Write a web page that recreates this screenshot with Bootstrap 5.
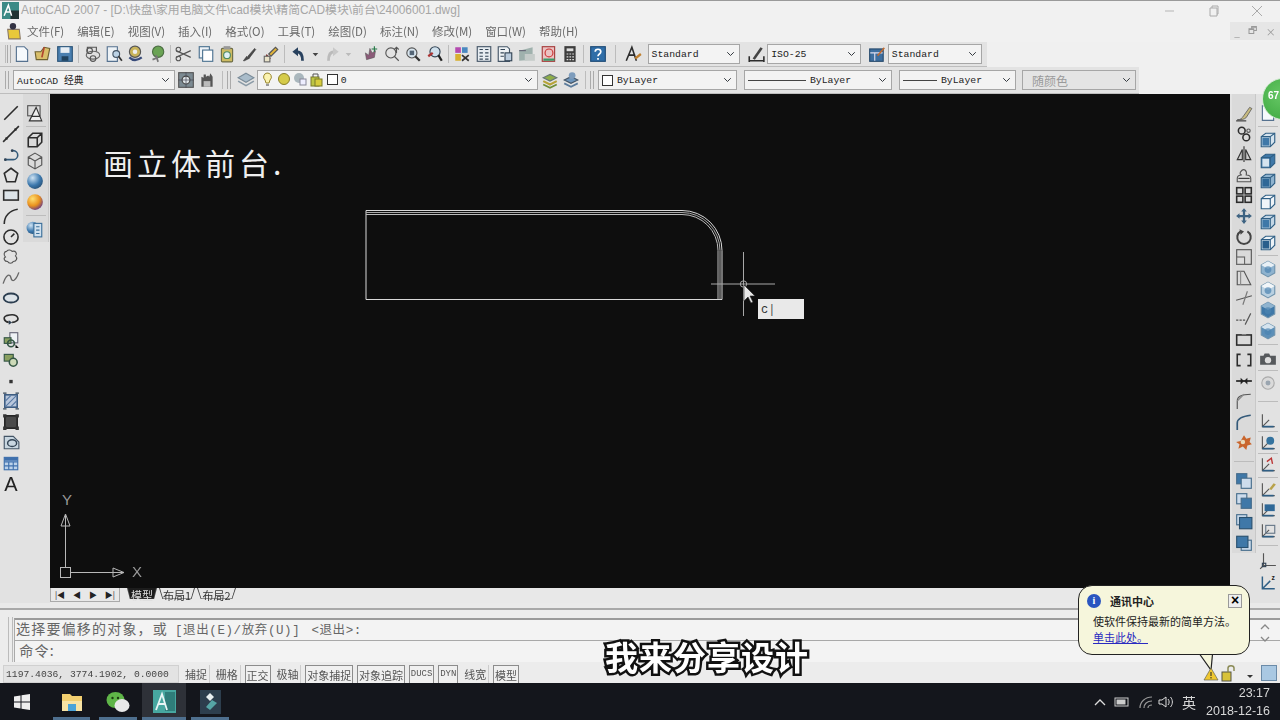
<!DOCTYPE html>
<html lang="zh-CN">
<head>
  <meta charset="UTF-8" />
  <meta name="viewport" content="width=device-width, initial-scale=1.0"/>
  <title>AutoCAD 2007</title>
  <link href="https://cdn.jsdelivr.net/npm/bootstrap@5.3.0/dist/css/bootstrap.min.css" rel="stylesheet">
  <style>
    html, body { margin: 0; height: 720px; overflow: hidden; background: #ececec; }
    body { font-family: "Liberation Sans", "Noto Sans CJK SC", sans-serif; color: #444; }
    .cad-window { width: 1280px; height: 720px; position: relative; overflow: hidden; }
    .cad-soft { filter: blur(.45px); }

    .title-row { height: 20px; background: #f1f1f1; border-top: 1px solid #9a9a9a; font-size: 11.85px; color: #a6a6a6; padding-left: 2px; }
    .title-row .app-logo { width: 17px; height: 17px; margin-right: 2px; }
    .win-btns { width: 117px; }
    .menu-row { height: 22px; background: #f1f1f1; padding-left: 5px; font: 11.5px "Noto Sans CJK SC", sans-serif; color: #6a6a6a; }
    .menu-row .nav-link { padding: 0; color: #6a6a6a; margin-right: 13px; white-space: nowrap; }
    .doc-btns { margin-left: auto; width: 50px; height: 18px; color: #999; font-size: 10px; background: #e6e6e6; }

    .bar-row { background: #f0f0f0; }
    .bar-one { height: 25px; }
    .bar-two { height: 27px; }
    .bar-fill { height: 100%; background: #e3e3e3; border-bottom: 1px solid #bdbdbd; position: relative; }
    .bar-one .bar-fill { width: 987px; }
    .bar-two .bar-fill { width: 1139px; }
    .tool { flex: none; display: flex; align-items: center; justify-content: center; width: 21.6px; height: 20.6px; }
    .tool-letter { font: 20px/20px "Liberation Sans", sans-serif; color: #222; }
    .gap-sep { flex: none; display: flex; align-items: center; justify-content: center; }
    .gap-sep::after { content: ""; display: block; background: #bcbcbc; }
    .gap-h { height: 20px; }
    .gap-h::after { width: 1px; height: 18px; }
    .gap-v { width: 100%; }
    .gap-v::after { height: 1px; width: 20px; }
    .grip { flex: none; width: 4px; height: 18px; border-left: 1px solid #aaa; border-right: 1px solid #aaa; }

    .cad-combo.form-select { flex: none; height: 20px; padding: 0 16px 0 3px; border: 1px solid #a6a6a6; border-radius: 0; background-color: #f3f3f3; background-size: 9px 8px; background-position: right 4px center; font: 9.8px "Liberation Mono", "Noto Sans CJK SC", monospace; color: #222; display: flex; align-items: center; white-space: nowrap; }
    .cad-combo.is-off { color: #9a9a9a; background-color: #e4e4e4; font: 12px "Noto Sans CJK SC", sans-serif; }
    .combo-line { height: 1px; background: #444; }

    .main-row { height: 509px; }
    .side-left { width: 50px; background: #e2e2e2; }
    .side-right { width: 50px; background: #e2e2e2; padding-left: 2px; }
    .col-tools { padding-top: 8.7px; }
    .col-narrow { width: 23px; }
    .col-narrow .tool { width: 22px; }
    .col-wide { width: 24px; }
    .col-wide .tool { width: 24px; }
    .col-shade { background: #dadada; border-right: 1px solid #c8c8c8; }
    .col-shade.is-short { height: 148px; width: 26px; }
    .col-shade.is-mid { height: 459px; }
    .canvas-col { width: 1180px; }
    .cad-canvas { height: 494px; background: #0e0e0e; position: relative; color: #ddd; }
    .cad-canvas svg { position: absolute; left: 0; top: 0; }
    .canvas-note { position: absolute; left: 53px; top: 46px; font: 30px/44px "Noto Sans CJK SC", sans-serif; letter-spacing: 4px; color: #efefef; }
    .dyn-input { position: absolute; left: 708px; top: 205px; width: 46px; height: 20px; background: #e9e9e9; color: #333; font: 12px/22px "Liberation Mono", monospace; padding-left: 3px; }
    .ucs-label { position: absolute; font: 15px/16px "Liberation Sans", sans-serif; color: #999; }
    .tab-row { height: 15px; background: #e8e8e8; font: 11px/14px "Noto Sans CJK SC", sans-serif; color: #333; }
    .tab-nav { width: 70px; height: 14px; border: 1px solid #aaa; border-top: 0; font-size: 8px; color: #222; }
    .sheet-tab { height: 15px; position: relative; z-index: 0; text-align: center; }
    .sheet-tab::before { content: ""; position: absolute; inset: 0; z-index: -1; background: #e8e8e8; border: 1px solid #444; border-top: 0; transform-origin: top; transform: perspective(26px) rotateX(-24deg); }
    .sheet-tab.is-on { color: #ddd; width: 30px; margin-left: 7px; }
    .sheet-tab.is-on::before { background: #1c1c1c; }
    .tab-b1 { width: 36px; margin-left: 2px; }
    .tab-b2 { width: 39px; margin-left: 2px; }

    .cmd-gap { height: 5px; background: #e9e9e9; border-bottom: 2px solid #a8a8a8; box-sizing: content-box; }
    .cmd-pad { height: 8px; background: #ececec; }
    .cmd-box { height: 44px; margin-left: 14px; border-top: 2px solid #9a9a9a; border-left: 1px solid #aaa; background: #f3f3f3; font: 14px/18px "Noto Sans CJK SC", sans-serif; color: #666; position: relative; letter-spacing: 1.2px; }
    .cmd-line { height: 21px; padding-left: 1px; border-bottom: 1px solid #a8a8a8; white-space: nowrap; line-height: 17px; }
    .cmd-mono { font-family: "Liberation Mono", "Noto Sans CJK SC", monospace; font-size: 12.500px; letter-spacing: .6px; word-spacing: 3px; margin-left: 7px; }
    .cmd-scroll { position: absolute; right: 10px; top: 3px; }
    .cmd-grip { position: absolute; left: 8px; top: 617px; width: 5px; height: 45px; border-left: 1px solid #bbb; border-right: 1px solid #bbb; }

    .status-row { height: 19px; margin-top: 2px; background: #ececec; font: 11px/18px "Noto Sans CJK SC", sans-serif; color: #555; padding-left: 3px; }
    .coord-box { width: 176px; height: 18px; background: #e3e3e3; border: 1px solid #d0d0d0; font: 9.7px/17px "Liberation Mono", monospace; padding-left: 2px; margin-right: 4px; white-space: nowrap; color: #444; }
    .stat-btn { height: 18px; padding: 0 2px; margin-right: 3.8px; white-space: nowrap; border-right: 1px solid #ccc; }
    .stat-btn.is-on { border: 1px solid #8c8c8c; border-bottom: 0; border-right-color: #8c8c8c; background: #f0f0f0; padding: 0 1px; }
    .stat-mono { font: 9px/17px "Liberation Mono", monospace; }
    .tray-ic { position: absolute; top: 665px; }

    .task-row { height: 37px; background: #14161c; position: relative; color: #d8d8d8; }
    .task-btn { height: 37px; display: flex; align-items: center; justify-content: center; position: relative; }
    .task-btn .task-line { position: absolute; left: 0; right: 0; bottom: 0; height: 3px; background: #4e6f8e; }
    .task-btn.is-on { background: #2e3138; }
    .clock-box { text-align: right; font: 12.5px/18px "Liberation Sans", sans-serif; margin-left: 10px; }
    .tray-box { padding-right: 10px; height: 37px; }
    .tray-han { font: 14px "Noto Sans CJK SC", sans-serif; }

    .green-ball { position: absolute; left: 1262px; top: 78px; width: 42px; height: 42px; border-radius: 50%; background: radial-gradient(circle at 45% 40%, #66c765, #3aa63d); border: 1px solid #cfe7cf; color: #fff; font: bold 10px/34px "Liberation Sans", sans-serif; padding-left: 5px; }
    .note-balloon { position: absolute; left: 1078px; top: 585px; width: 172px; height: 70px; background: #f6f6dc; border: 1.5px solid #222; border-radius: 14px; font: 11px/15px "Noto Sans CJK SC", sans-serif; color: #222; padding: 7px 0 0 14px; }
    .note-head { font-weight: 700; padding-left: 17px; margin-bottom: 5px; line-height: 16px; }
    .note-link { color: #2a2ac0; text-decoration: underline; }
    .note-close { position: absolute; left: 149px; top: 8px; width: 14px; height: 14px; background: #eee; border: 1px solid #999; font: bold 14px/11px "Liberation Sans", sans-serif; text-align: center; color: #000; }
    .note-info { position: absolute; left: 8px; top: 8px; width: 14px; height: 14px; border-radius: 50%; background: #2a55c0; color: #fff; font: bold 10px/14px "Liberation Serif", serif; text-align: center; }
    .note-tail { position: absolute; left: 1190px; top: 646px; }
    .sub-title { position: absolute; left: 605px; top: 632px; font: 700 33px/48px "Noto Sans CJK SC", sans-serif; letter-spacing: 1px; color: #fff; -webkit-text-stroke: 5px #111; paint-order: stroke fill; white-space: nowrap; }
  </style>
</head>
<body>
<div class="cad-window">
  <div class="cad-soft">
    <!-- title -->
    <div class="title-row d-flex align-items-center">
      <svg class="app-logo" viewBox="0 0 16 16"><rect width="16" height="16" fill="#3b8a86"/><rect x="8" y="8" width="8" height="8" fill="#233"/><path d="M2 13L6 3l3 10M3.5 9.5h4" fill="none" stroke="#fff" stroke-width="1.4"/></svg>
      <span>AutoCAD 2007 - [D:\快盘\家用电脑文件\cad模块\精简CAD模块\前台\24006001.dwg]</span>
      <div class="win-btns ms-auto d-flex justify-content-between pe-3">
        <svg width="14" height="14" viewBox="0 0 14 14"><path d="M2 7h9" stroke="#b5b5b5"/></svg>
        <svg width="14" height="14" viewBox="0 0 14 14"><path d="M3 4h7v8H3zM5 4V2h6v8h-1" fill="none" stroke="#aaa"/></svg>
        <svg width="14" height="14" viewBox="0 0 14 14"><path d="M2 2l10 10M12 2L2 12" stroke="#aaa"/></svg>
      </div>
    </div>
    <!-- menu -->
    <div class="menu-row d-flex align-items-center">
      <svg width="18" height="19" viewBox="0 0 16 18" class="me-1"><path d="M2 7h11l1 9H3z" fill="#e8c83a" stroke="#876"/><circle cx="7" cy="4" r="3" fill="#334"/></svg>
      <nav class="nav flex-nowrap">
        <a class="nav-link" href="#">文件(F)</a><a class="nav-link" href="#">编辑(E)</a><a class="nav-link" href="#">视图(V)</a><a class="nav-link" href="#">插入(I)</a><a class="nav-link" href="#">格式(O)</a><a class="nav-link" href="#">工具(T)</a><a class="nav-link" href="#">绘图(D)</a><a class="nav-link" href="#">标注(N)</a><a class="nav-link" href="#">修改(M)</a><a class="nav-link" href="#">窗口(W)</a><a class="nav-link" href="#">帮助(H)</a>
      </nav>
      <div class="doc-btns d-flex justify-content-around align-items-center"><span>_</span><span>🗗</span><span>×</span></div>
    </div>
    <!-- toolbars -->
    <div class="bar-row bar-one">
      <div class="bar-fill d-flex align-items-center">
        <div class="d-flex align-items-center" id="barStd"></div>
        <div class="cad-combo form-select ms-1" style="width:92px">Standard</div>
        <span class="tool" style="margin-left:6px" data-icon="dim"></span>
        <div class="cad-combo form-select" style="width:94px">ISO-25</div>
        <span class="tool" style="margin-left:5px" data-icon="tblstyle"></span>
        <div class="cad-combo form-select" style="width:94px">Standard</div>
      </div>
    </div>
    <div class="bar-row bar-two">
      <div class="bar-fill d-flex align-items-center">
        <span class="grip me-1" style="margin-left:5px"></span>
        <div class="cad-combo form-select" style="width:162px">AutoCAD 经典</div>
        <span class="tool" data-icon="gear"></span>
        <span class="tool" data-icon="house"></span>
        <span class="gap-sep gap-h" style="width:9px"></span>
        <span class="grip me-1"></span>
        <span class="tool" data-icon="layers"></span>
        <div class="cad-combo form-select" style="width:281px">
          <span class="d-flex align-items-center" id="layerIcons"></span><span>0</span>
        </div>
        <span class="tool" style="margin-left:1px" data-icon="layers2"></span>
        <span class="tool" data-icon="layers3"></span>
        <span class="gap-sep gap-h" style="width:8px"></span>
        <span class="grip me-1"></span>
        <div class="cad-combo form-select" style="width:139px"><svg width="11" height="11" class="me-1 flex-none"><rect x=".5" y=".5" width="10" height="10" fill="#fff" stroke="#333"/></svg>ByLayer</div>
        <div class="cad-combo form-select" style="width:148px;margin-left:7px"><span class="combo-line me-1" style="width:58px"></span>ByLayer</div>
        <div class="cad-combo form-select" style="width:117px;margin-left:7px"><span class="combo-line me-1" style="width:34px"></span>ByLayer</div>
        <div class="cad-combo form-select is-off" style="width:114px;margin-left:6px;padding-left:9px">随颜色</div>
      </div>
    </div>
    <!-- middle -->
    <div class="main-row d-flex">
      <div class="side-left d-flex">
        <div class="col-tools col-narrow d-flex flex-column" id="leftOne"></div>
        <div class="col-tools col-wide col-shade is-short d-flex flex-column" id="leftTwo"></div>
      </div>
      <div class="canvas-col">
        <div class="cad-canvas">
          <div class="canvas-note">画立体前台.</div>
          <svg width="1180" height="494" viewBox="50 94 1180 494">
            <g fill="none" stroke="#d8d8d8" stroke-width="1">
              <path d="M366 299.5V210.5H682A40 40 0 0 1 722 250.5V299.5H366"/>
              <path d="M366 212.5H682A38 38 0 0 1 720 250.5V299.5" stroke="#aaa"/>
              <path d="M366 214.5H682A36 36 0 0 1 718 250.5V299.5" stroke="#bbb"/>
            </g>
            <g stroke="#a8a8a8" fill="none">
              <path d="M711 284h64M743.5 252v64"/>
              <circle cx="743.5" cy="284" r="3.2"/>
            </g>
            <path d="M744 285v16l4-4 3 6 2-1-3-6h5z" fill="#e8e8e8" stroke="#222" stroke-width=".6"/>
            <g fill="none" stroke="#b8b8b8">
              <rect x="60.5" y="567.5" width="10" height="10"/>
              <path d="M65.5 567V515M61 526l4.5-12 4.5 12zM70 572.5h54M113 568l11 4.5-11 4.5z"/>
            </g>
          </svg>
          <div class="dyn-input">c<span style="color:#555">|</span></div>
          <div class="ucs-label" style="left:12px;top:398px">Y</div>
          <div class="ucs-label" style="left:82px;top:470px">X</div>
        </div>
        <div class="tab-row d-flex align-items-start">
          <div class="tab-nav d-flex justify-content-around align-items-center"><span>|◀</span><span>◀</span><span>▶</span><span>▶|</span></div>
          <div class="sheet-tab is-on">模型</div><div class="sheet-tab tab-b1">布局1</div><div class="sheet-tab tab-b2">布局2</div>
        </div>
      </div>
      <div class="side-right d-flex">
        <div class="col-tools col-wide col-shade is-mid d-flex flex-column" id="rightOne"></div>
        <div class="col-tools col-wide d-flex flex-column" id="rightTwo"></div>
      </div>
    </div>
    <!-- command -->
    <div class="cmd-gap"></div>
    <div class="cmd-pad"></div>
    <div class="cmd-box">
      <div class="cmd-line">选择要偏移的对象，或<span class="cmd-mono">[退出(E)/放弃(U)] &lt;退出&gt;:</span></div>
      <div>&nbsp;命令:</div>
      <svg class="cmd-scroll" width="10" height="20" viewBox="0 0 10 20"><path d="M1 6l4-4 4 4M1 14l4 4 4-4" fill="none" stroke="#888" stroke-width="1.3"/></svg>
    </div>
    <!-- status -->
    <div class="status-row d-flex align-items-center">
      <div class="coord-box">1197.4036, 3774.1902, 0.0000</div>
      <div class="stat-btn">捕捉</div><div class="stat-btn">栅格</div><div class="stat-btn is-on">正交</div><div class="stat-btn">极轴</div><div class="stat-btn is-on">对象捕捉</div><div class="stat-btn is-on">对象追踪</div><div class="stat-btn is-on stat-mono">DUCS</div><div class="stat-btn is-on stat-mono">DYN</div><div class="stat-btn">线宽</div><div class="stat-btn is-on">模型</div>
    </div>
    <!-- taskbar -->
    <div class="task-row d-flex align-items-center">
      <div class="task-btn" style="width:44px">
        <svg width="16" height="16" viewBox="0 0 16 16"><path d="M0 2.5l6.5-1V7.5H0zM7.5 1.3L16 0V7.5H7.5zM0 8.5h6.5v6L0 13.5zM7.5 8.5H16V16l-8.5-1.3z" fill="#eee"/></svg>
      </div>
      <div class="task-btn" style="width:37px;margin-left:9px">
        <svg width="22" height="20" viewBox="0 0 22 20"><path d="M1 2h8l2 2h10v15H1z" fill="#f2cf70"/><path d="M1 9h20v10H1z" fill="#f8e3a4"/><path d="M7 12h8v7H7z" fill="#4aa3d8"/></svg>
        <span class="task-line"></span>
      </div>
      <div class="task-btn" style="width:38px;margin-left:9px">
        <svg width="24" height="22" viewBox="0 0 24 22"><ellipse cx="9.5" cy="9" rx="9" ry="8" fill="#5fb548"/><ellipse cx="16" cy="14.5" rx="7.5" ry="6.5" fill="#e9e9e9"/><circle cx="6.5" cy="7" r="1.2" fill="#1c3a10"/><circle cx="12" cy="7" r="1.2" fill="#1c3a10"/></svg>
        <span class="task-line"></span>
      </div>
      <div class="task-btn is-on" style="width:44px;margin-left:5px">
        <svg width="23" height="23" viewBox="0 0 23 23"><rect width="23" height="23" fill="#47a7a0"/><rect x="12" y="2" width="10" height="19" fill="#2f7d7a"/><path d="M3 20L9 4l5 16M5 14h7" fill="none" stroke="#e8f5f5" stroke-width="1.8"/></svg>
        <span class="task-line"></span>
      </div>
      <div class="task-btn" style="width:38px;margin-left:5px">
        <svg width="21" height="24" viewBox="0 0 21 24"><rect width="21" height="24" fill="#2d3e4d"/><path d="M10 3l4 4-4 4-4-4z" fill="#e8eef0"/><path d="M12 10l5 3-7 7-4-3z" fill="#55a5a5"/></svg>
        <span class="task-line"></span>
      </div>
      <div class="tray-box ms-auto d-flex align-items-center">
        <svg class="me-2" width="12" height="8" viewBox="0 0 12 8"><path d="M1 7l5-5 5 5" fill="none" stroke="#ddd" stroke-width="1.3"/></svg>
        <svg class="me-2" width="16" height="12" viewBox="0 0 16 12"><rect x="1" y="2" width="13" height="8" fill="none" stroke="#ccc"/><rect x="2.5" y="3.5" width="9" height="5" fill="#ccc"/></svg>
        <svg class="me-1" width="16" height="14" viewBox="0 0 16 14"><path d="M2 13C2 7 7 2 14 2M6 13c0-4 3-7 8-7M10 13c0-2 1-3 4-3" fill="none" stroke="#999" stroke-width="1.2"/></svg>
        <svg class="me-2" width="16" height="14" viewBox="0 0 16 14"><path d="M1 5h3l4-3v10L4 9H1z" fill="none" stroke="#ddd"/><path d="M10 4c1.500 2 1.500 4 0 6M12.500 2c2.500 3 2.500 7 0 10" fill="none" stroke="#ddd"/></svg>
        <span class="tray-han">英</span>
        <div class="clock-box">23:17<br>2018-12-16</div>
      </div>
    </div>
  </div>

  <div class="cmd-grip"></div>
  <div class="green-ball">67</div>
  <svg class="note-tail" width="40" height="28" viewBox="0 0 40 28"><path d="M6 3l15 21 2-21" fill="#f6f6dc" stroke="#222" stroke-width="1.2"/><path d="M5 1h19v6H5z" fill="#f6f6dc"/></svg>
  <div class="note-balloon">
    <span class="note-info">i</span>
    <span class="note-close">×</span>
    <div class="note-head">通讯中心</div>
    <div>使软件保持最新的简单方法。</div>
    <div class="note-link" style="margin-top:1px">单击此处。</div>
  </div>
  <svg class="tray-ic" style="left:1203px" width="20" height="17" viewBox="0 0 20 17"><path d="M8 3l7 12H1z" fill="#f0c830" stroke="#665" stroke-width=".7"/><path d="M8 7v4M8 12v1.500" stroke="#222"/></svg>
  <svg class="tray-ic" style="left:1220px" width="18" height="17" viewBox="0 0 18 17"><rect x="2" y="7" width="9" height="9" fill="#d8c23a" stroke="#554"/><path d="M8 7V3c0-3 6-3 6 0v3" fill="none" stroke="#8a8a55" stroke-width="1.5"/></svg>
  <svg class="tray-ic" style="left:1245px" width="10" height="17" viewBox="0 0 10 17"><path d="M2 10h6l-3 3z" fill="#333"/></svg>
  <svg class="tray-ic" style="left:1261px" width="16" height="16" viewBox="0 0 16 16"><rect x=".5" y=".5" width="15" height="15" fill="#a9c8e2" stroke="#6b8ba8"/></svg>
  <div class="sub-title">我来分享设计</div>
</div>

<!-- shared gradients for the shaded toolbar icons -->
<svg width="0" height="0" class="position-absolute">
  <defs>
    <radialGradient id="ballBlue" cx=".35" cy=".3" r=".8"><stop offset="0" stop-color="#cfe3f3"/><stop offset=".6" stop-color="#3c78ad"/><stop offset="1" stop-color="#244c70"/></radialGradient>
    <radialGradient id="ballOrange" cx=".35" cy=".3" r=".8"><stop offset="0" stop-color="#ffdf70"/><stop offset=".55" stop-color="#e9921f"/><stop offset="1" stop-color="#5a2e90"/></radialGradient>
  </defs>
</svg>

<script src="https://cdn.jsdelivr.net/npm/bootstrap@5.3.0/dist/js/bootstrap.bundle.min.js"></script>
<script>
  const ink = 'fill="none" stroke="#2c2c2c" stroke-width="1.4"';
  const thin = 'fill="none" stroke="#555" stroke-width="1"';
  const blueBox = 'fill="#3f78a8" stroke="#29506f"';
  const cube = (a, b) => `<path d="M2 5l4-3h8v8l-4 4H2z" fill="${a}" stroke="#2f5f85"/><path d="M2 5h8v9M10 5l4-3" fill="none" stroke="#2f5f85"/><path d="M3 6h6v7H3z" fill="${b}"/>`;
  const ucs = extra => `<path d="M3 2v11h11M3 13l6-6" ${thin} stroke-width="1.4"/><path d="M3 13h10" stroke="#2f5f85" stroke-width="1.500"/>${extra || ""}`;
  const stack = (a, b) => `<rect x="1.500" y="1.500" width="9" height="9" fill="${a}" stroke="#456c8b"/><rect x="5.500" y="5.500" width="9" height="9" fill="${b}" stroke="#456c8b"/>`;
  const ball = (top, side) => `<path d="M8 1l6 3.500v7L8 15l-6-3.500v-7z" fill="${side}" stroke="#6f93ad" stroke-linejoin="round"/><path d="M8 1l6 3.500L8 8 2 4.500z" fill="${top}"/><circle cx="8" cy="8.500" r="3" fill="#4c83b0" fill-opacity=".7"/>`;

  const icons = {
    new: `<path d="M3 1.500h7l3 3v10H3z" fill="#f5f9fc" stroke="#55718f"/>`,
    open: `<path d="M1 6h5l3-4 5 1-2 10H2z" fill="#d9bf6a" stroke="#6e6130"/><path d="M9 2l-2 9" stroke="#b0452f" stroke-width="1.500"/>`,
    save: `<rect x="1.500" y="1.500" width="13" height="13" fill="#4a7fb0" stroke="#2b5478"/><rect x="4" y="2" width="8" height="5" fill="#e8eef4"/><rect x="5" y="10" width="6" height="4" fill="#20425e"/>`,
    print: `<path d="M3 6V2h8v4" ${thin}/><ellipse cx="8" cy="9" rx="6" ry="3.500" fill="#e0e0e0" stroke="#666"/><circle cx="5" cy="5" r="2.500" ${thin}/><circle cx="8" cy="12" r="2.500" ${thin}/>`,
    preview: `<path d="M2 1.500h9v13H2z" fill="#edf2f6" stroke="#55718f"/><circle cx="10" cy="8" r="3" fill="#bcd3e6" stroke="#456"/><path d="M12 10l3 4" stroke="#333" stroke-width="1.500"/>`,
    plot: `<circle cx="8" cy="6" r="5" fill="#c8b35a" stroke="#555"/><path d="M3 11c3 3 7 3 11 0" stroke="#384b7a" stroke-width="2" fill="none"/><circle cx="8" cy="6" r="2" fill="#eee"/>`,
    publish: `<circle cx="9" cy="6" r="5" fill="#6aa354" stroke="#4b6e42"/><path d="M7 9l2 6M4 13l5-2" stroke="#777" stroke-width="1.500"/>`,
    cut: `<path d="M1 5l13 6M1 11l13-6" stroke="#555"/><circle cx="3" cy="4" r="2" ${thin}/><circle cx="3" cy="12" r="2" ${thin}/>`,
    copy: `<rect x="2" y="1.500" width="9" height="10" fill="#eef3f7" stroke="#4b7190"/><rect x="5" y="4.500" width="9" height="10" fill="#fff" stroke="#4b7190"/>`,
    paste: `<rect x="3" y="3" width="10" height="12" rx="1" fill="#cdbb62" stroke="#6b6b44"/><rect x="5" y="1" width="6" height="3" fill="#999"/><circle cx="8" cy="9" r="3" fill="#dfeff5" stroke="#4e8a5f"/>`,
    brush: `<path d="M3 14l3-4 2 2-4 2zM7 10l6-7 1 1-6 8z" fill="#4a4a4a" stroke="#333" stroke-width=".5"/>`,
    match: `<path d="M2 14l2-6 4 4z" fill="#7b2c24"/><path d="M6 8l6-6 2 2-6 6z" fill="#e4b63a" stroke="#555"/><rect x="2" y="10" width="5" height="5" fill="#e8e2c8" stroke="#666"/>`,
    undo: `<path d="M12 14c0-6-2-8-5-8" fill="none" stroke="#28415e" stroke-width="2.500"/><path d="M8 2L3 6l5 4z" fill="#28415e"/>`,
    dot: `<path d="M5 7h5l-2.500 3z" fill="#444"/>`,
    redo: `<path d="M4 14c0-6 2-8 5-8" fill="none" stroke="#bbb" stroke-width="2.500"/><path d="M8 2l5 4-5 4z" fill="#c8c8c8"/>`,
    dotDim: `<path d="M5 7h5l-2.500 3z" fill="#bbb"/>`,
    pan: `<path d="M4 13L3 7l3 2 1-6 2 4 3-2-1 6z" fill="#8b5a78" stroke="#555" stroke-width=".5"/><path d="M11 1v5M8.500 3.500h5" stroke="#274"/>`,
    zoomrt: `<circle cx="7" cy="7" r="4.500" ${thin}/><path d="M10 10l4 4M12 2v5M10 4l2-2 2 2" stroke="#555" fill="none"/>`,
    zoomwin: `<circle cx="7" cy="7" r="4.500" fill="#d9e5ee" stroke="#555"/><path d="M10 10l4 4" stroke="#333" stroke-width="2"/><rect x="5" y="5" width="4" height="4" fill="#567"/>`,
    zoomprev: `<circle cx="8" cy="6" r="4.500" fill="#cfe0ec" stroke="#345"/><path d="M11 9l3 5" stroke="#222" stroke-width="2"/><path d="M2 10l4-3" stroke="#a33" stroke-width="2"/>`,
    props: `<rect x="2" y="2" width="5" height="5" fill="#b44ab0"/><rect x="8" y="2" width="5" height="5" fill="#4a88c0"/><rect x="2" y="8" width="5" height="6" fill="#d8b030"/><path d="M8 9l6 5M14 9l-6 5" stroke="#333" stroke-width="1.500"/>`,
    design: `<rect x="2" y="1.500" width="12" height="13" fill="#e6ecf1" stroke="#456"/><path d="M4 4h3M9 4h3M4 7h3M9 7h3M4 10h3M9 10h3M4 12.500h3M9 12.500h3" stroke="#345"/>`,
    palette: `<path d="M2 1.500h8l2 2v11H2z" fill="#eef2f5" stroke="#456"/><rect x="8" y="7" width="6" height="7" fill="#bcd" stroke="#345"/><path d="M4 4h4M4 7h3M4 10h3" stroke="#345"/>`,
    sheet: `<path d="M1 5l12-3v11L1 14z" fill="#9fb1ad"/><path d="M6 8h9v6H6z" fill="#c5cbc9"/><path d="M1 5h6" stroke="#667"/>`,
    markup: `<rect x="2" y="1.500" width="11" height="13" fill="#eac2c2" stroke="#a53a3a"/><circle cx="8" cy="7" r="3.500" fill="none" stroke="#c33"/><path d="M3 13h10" stroke="#3a9a6a" stroke-width="2"/>`,
    calc: `<rect x="3" y="1" width="10" height="14" fill="#3d3d3d"/><rect x="5" y="3" width="6" height="2.500" fill="#ddd"/><path d="M5 8h1.500M7.500 8H9M10 8h1.500M5 10.500h1.500M7.500 10.500H9M10 10.500h1.500M5 13h1.500M7.500 13H9M10 13h1.500" stroke="#ddd"/>`,
    help: `<rect x="1.500" y="1.500" width="13" height="13" fill="#2f6ea8" stroke="#1d4a75"/><path d="M5.500 6c0-3 5-3 5 0 0 2-2.500 2-2.500 4M8 11.500v1.500" fill="none" stroke="#fff" stroke-width="1.500"/>`,
    txtstyle: `<path d="M2 14L7 2l4 12M4 9h6" ${ink}/><path d="M10 12l5-4" stroke="#c08030" stroke-width="2"/>`,
    dim: `<path d="M2 14h13M2 10v5M15 10v5" ${ink}/><path d="M5 12l7-10 2 1-7 10z" fill="#444"/>`,
    tblstyle: `<rect x="1.500" y="3.500" width="12" height="11" fill="#3d6fa0" stroke="#274a6d"/><path d="M2 7h11M6 7v7" stroke="#dde"/><path d="M8 9l6-7 1 1-6 7z" fill="#c06a30"/>`,
    gear: `<rect x="1.500" y="1.500" width="13" height="13" fill="#7c8a92" stroke="#555"/><circle cx="8" cy="8" r="3.500" fill="#dfe5e8" stroke="#444"/><path d="M8 1v14M1 8h14" stroke="#445" stroke-width=".6"/>`,
    house: `<path d="M3 14V5l2 1V3h2v2l2-1 1 1 1-3 2 3v9z" fill="#555"/><rect x="5" y="9" width="6" height="5" fill="#bbb"/>`,
    layers: `<path d="M8 2l7 4-7 4-7-4z" fill="#a9bcca" stroke="#7b8c99"/><path d="M1 9l7 4 7-4" fill="none" stroke="#8b9ba7" stroke-width="1.500"/>`,
    layers2: `<path d="M8 3l6 3-6 3-6-3z" fill="#8eae48" stroke="#677"/><path d="M2 9l6 3 6-3" fill="none" stroke="#b7a337" stroke-width="1.800"/><path d="M2 12l6 3 6-3" fill="none" stroke="#6e8d37" stroke-width="1.500"/>`,
    layers3: `<path d="M8 5l6 3-6 3-6-3z" fill="#6e95bb" stroke="#456"/><path d="M2 11l6 3 6-3" fill="none" stroke="#5c7c9c" stroke-width="1.500"/><circle cx="9" cy="4" r="3" fill="#7d9cbc"/>`,
    bulb: `<path d="M6 1a4 4 0 0 1 3 7l-1 3H5L4 8a4 4 0 0 1 2-7z" fill="#fbf3b0" stroke="#99872e"/><rect x="5" y="12" width="3" height="2" fill="#999"/>`,
    sun: `<circle cx="7" cy="7" r="5.500" fill="#d5cb4a" stroke="#8a8029"/>`,
    sunpale: `<circle cx="6" cy="6" r="5" fill="#aab7bd"/><rect x="7" y="7" width="6" height="6" fill="#eef" stroke="#889"/>`,
    lock: `<rect x="2" y="5" width="8" height="9" fill="#bcc544" stroke="#7b7a2a"/><rect x="6" y="7" width="7" height="7" fill="#d7cc3e" stroke="#7b7a2a"/><path d="M4 5V2h5v3" ${thin}/>`,
    swatch: `<rect x="2.500" y="2.500" width="10" height="10" fill="#fff" stroke="#333"/>`,

    line: `<path d="M2 14L14 2" ${ink}/>`,
    xline: `<path d="M1 15L15 1" ${ink}/><rect x="3" y="11" width="2" height="2" fill="#2c2c2c"/><rect x="11" y="3" width="2" height="2" fill="#2c2c2c"/>`,
    pline: `<path d="M2 13h8a4 4 0 0 0 0-8H9" fill="none" stroke="#345a7a" stroke-width="1.400"/><circle cx="3" cy="13" r="1.200" fill="#345"/><circle cx="9" cy="5" r="1.200" fill="#345"/>`,
    polygon: `<path d="M8 2l6 4.500-2.200 7.500H4.200L2 6.500z" ${ink}/>`,
    rect: `<rect x="1.500" y="4" width="13" height="8.500" fill="#dce3e8" stroke="#2c2c2c" stroke-width="1.400"/>`,
    arc: `<path d="M2 15C2 8 7 3 14 2" ${ink}/>`,
    circle: `<circle cx="8" cy="8" r="6.300" ${ink}/><path d="M8 8l3-3" ${ink}/>`,
    cloud: `<path d="M4 3c2-2 4-1 5 0 3-1 5 2 3 4 2 2 1 5-2 5-1 2-4 2-5 0-3 0-4-3-2-4-2-2-1-5 1-5z" ${thin} stroke-width="1.300"/>`,
    spline: `<path d="M1 13C4 4 7 4 8 8s4 3 7-5" fill="none" stroke="#666" stroke-width="1.200"/>`,
    ellipse: `<ellipse cx="8" cy="8" rx="6.500" ry="4" fill="#dce3e8" stroke="#2c3e50" stroke-width="1.600"/>`,
    earc: `<path d="M6 11C1 10 1 6 4 5c4-1 9-1 10 2 1 2-2 4-5 4" ${ink}/><path d="M6 9v4l3-2z" fill="#2c3e50"/>`,
    insert: `<rect x="7" y="1.500" width="7" height="9" fill="#eef2f5" stroke="#667"/><rect x="2" y="6" width="6" height="5" fill="#8aa060" stroke="#354"/><circle cx="8" cy="11" r="3" fill="none" stroke="#354" stroke-width="1.500"/><path d="M12 12l3 3h-3z" fill="#111"/>`,
    block: `<rect x="2" y="3" width="8" height="6" fill="#8aa060" stroke="#354"/><circle cx="10" cy="10" r="3.500" fill="#cddab8" stroke="#354" stroke-width="1.400"/>`,
    point: `<rect x="6.500" y="7" width="3" height="3" fill="#333"/>`,
    hatch: `<rect x="2.500" y="2.500" width="11" height="11" fill="#b9c7dc" stroke="#3b5a80" stroke-width="1.400"/><path d="M3 8l5-5M3 13L13 3M8 13l5-5" stroke="#5a7ba5"/><path d="M1 1h3M12 1h3M1 15h3M12 15h3" stroke="#345"/>`,
    grad: `<rect x="2.500" y="2.500" width="11" height="11" fill="#4a4a4a" stroke="#222" stroke-width="1.400"/><path d="M1 1h3v3H1zM12 1h3v3h-3zM1 12h3v3H1zM12 12h3v3h-3z" fill="#333"/>`,
    region: `<path d="M2 3h8l5 5v6H2z" fill="#c8d6e0" stroke="#456"/><ellipse cx="9" cy="9" rx="4" ry="3" fill="none" stroke="#345" stroke-width="1.300"/>`,
    table: `<rect x="2" y="3" width="12" height="11" fill="#bcd2ea" stroke="#3f70ad"/><path d="M2 7h12M2 10.500h12M6 7v7M10 7v7" stroke="#3f70ad"/><rect x="2" y="3" width="12" height="3" fill="#3f70ad"/>`,

    boxa: `<rect x="1.500" y="1.500" width="11" height="9" ${thin} stroke-width="1.200"/><path d="M3 15L9 3l5 12zM5 11h7" fill="#eee" stroke="#333"/>`,
    box: `<path d="M2 6l4-4h8v8l-4 4H2zM2 6h8v8M10 6l4-4" ${ink}/>`,
    wire: `<path d="M8 1l6 3.500v7L8 15l-6-3.500v-7zM8 8v7M8 8l6-3.500M8 8L2 4.500" ${thin}/>`,
    sphere: `<circle cx="8" cy="8" r="7" fill="url(#ballBlue)"/>`,
    orange: `<circle cx="8" cy="8" r="7" fill="url(#ballOrange)"/>`,
    material: `<circle cx="6" cy="7" r="5.500" fill="url(#ballBlue)"/><rect x="7" y="3" width="7" height="12" fill="#cfe0ee" stroke="#3b6f9a"/><path d="M9 6h3M9 9h3M9 12h3" stroke="#3b6f9a"/>`,

    erase: `<path d="M2 14c3 0 4-1 6-4l5-7 2 1-5 8c-2 2-5 2-8 2z" fill="#c8bb80" stroke="#555" stroke-width=".7"/><path d="M1 15h9" stroke="#333"/>`,
    dup: `<circle cx="6" cy="5" r="3" ${ink}/><circle cx="10" cy="11" r="3" ${ink}/><circle cx="12" cy="5" r="1.500" ${thin}/>`,
    mirror: `<path d="M8 1v14" stroke="#333"/><path d="M6.500 4v9H2zM9.500 4v9H14z" fill="#ccc" stroke="#333"/>`,
    offset: `<path d="M2 14h12v-3c0-2-2-3-4-3 1-4-2-6-4-4S4 7 6 8c-2 0-4 1-4 3z" ${thin} stroke-width="1.200"/><path d="M3 11h10" stroke="#333"/>`,
    array: `<rect x="1.500" y="1.500" width="5.500" height="5.500" ${ink}/><rect x="9" y="1.500" width="5.500" height="5.500" ${ink}/><rect x="1.500" y="9" width="5.500" height="5.500" ${ink}/><rect x="9" y="9" width="5.500" height="5.500" ${ink}/>`,
    move: `<path d="M8 1l2.500 3H9v3h3V5.500L15 8l-3 2.500V9H9v3h1.500L8 15l-2.500-3H7V9H4v1.500L1 8l3-2.500V7h3V4H5.500z" fill="#3e6382"/>`,
    rotate: `<path d="M5 3a6 6 0 1 0 6 0" fill="none" stroke="#444" stroke-width="1.800"/><path d="M4 1l4 2-3 3z" fill="#444"/>`,
    scale: `<rect x="1.500" y="1.500" width="13" height="13" ${thin}/><rect x="1.500" y="8" width="7" height="6.500" fill="#ddd" stroke="#666"/>`,
    stretch: `<path d="M2 2h6l6 12H2z" ${thin} stroke-width="1.300"/><path d="M5 2v12" stroke="#888"/>`,
    trim: `<path d="M1 10l14-4" stroke="#555"/><path d="M11 2l-4 12" stroke="#777"/>`,
    extend: `<path d="M1 9h8" stroke="#555" stroke-dasharray="2 1"/><path d="M14 3L9 13" stroke="#555"/>`,
    brk: `<rect x="1.500" y="3.500" width="13" height="9" ${ink}/><path d="M6 2h4" stroke="#dadada" stroke-width="2"/>`,
    brk2: `<path d="M5 3H2v10h3M11 3h3v10h-3" ${ink}/>`,
    join: `<path d="M1 8h14" stroke="#222" stroke-width="1.500"/><path d="M5 5l3 3-3 3M11 5L8 8l3 3" fill="#222"/>`,
    chamfer: `<path d="M2 15V8C2 4 6 2 14 2" ${thin} stroke-width="1.300"/><path d="M2 8l6-6" stroke="#888"/>`,
    fillet: `<path d="M2 15V9c0-4 4-6 12-7" fill="none" stroke="#345a7a" stroke-width="1.500"/>`,
    explode: `<path d="M8 2l2 3 4-1-1 4 2 2-4 1-1 4-3-3-4 2 1-4-3-2 4-1z" fill="#c9652c"/><circle cx="7" cy="8" r="2" fill="#e8d9b8"/>`,
    front: stack("#3f78a8", "#cddcec"),
    back: stack("#cddcec", "#3f78a8"),
    up: `<rect x="1.500" y="1.500" width="9" height="9" fill="#cddcec" stroke="#456c8b"/><rect x="4" y="4" width="11" height="10" ${blueBox}/>`,
    down: `<rect x="5.500" y="5.500" width="9" height="9" fill="#cddcec" stroke="#456c8b"/><rect x="1.500" y="2" width="10" height="10" ${blueBox}/>`,

    cube1: cube("#d5e3ee", "#3f78a8"), cube2: cube("#3f78a8", "#d5e3ee"),
    cube3: cube("#8fb3cf", "#2f6897"), cube4: cube("#f0f4f8", "#f0f4f8"),
    cube5: cube("#c3d6e5", "#3f78a8"), cube6: cube("#edf3f7", "#2a5f8c"),
    sp1: ball("#e8f0f6", "#8fb3cf"), sp2: ball("#f2f6f9", "#b9d0e1"), sp3: ball("#8fb3cf", "#3f78a8"), sp4: ball("#d5e3ee", "#5c8fb8"),
    camera: `<path d="M1 5h3l1-2h4l1 2h5v8H1z" fill="#56595c"/><circle cx="8" cy="9" r="2.800" fill="#ddd"/>`,
    target: `<circle cx="8" cy="8" r="5.500" fill="#dadada" stroke="#aaa"/><circle cx="8" cy="8" r="2.200" fill="#9aa5b0"/>`,
    u1: ucs(), u2: ucs(`<circle cx="10" cy="6" r="3.500" fill="#34739f"/>`), u3: ucs(`<path d="M7 5l4-3 1 5" fill="none" stroke="#b33" stroke-width="1.200"/>`),
    u4: ucs(`<path d="M9 7l4-5 2 1-4 5z" fill="#b8a24a"/>`), u5: ucs(`<rect x="5" y="3" width="9" height="6" fill="#2f6897"/>`), u6: ucs(`<rect x="6" y="3" width="8" height="7" fill="none" stroke="#678"/>`),
    u7: `<path d="M4 1v11h11M4 12l-3 3" ${thin} stroke-width="1.300"/><rect x="3" y="10" width="3" height="3" fill="none" stroke="#345"/>`,
    u8: `<path d="M3 3v11h11M3 14l7-7" fill="none" stroke="#2f5f85" stroke-width="1.300"/><text x="11" y="6" font-family="Liberation Sans" font-weight="700" font-size="6" fill="#222">z</text>`
  };

  const svgOf = (name, size) => `<svg width="${size}" height="${size}" viewBox="0 0 16 16">${icons[name] || ""}</svg>`;
  const toolOf = name => `<span class="tool">${name === "atext" ? `<span class="tool-letter">A</span>` : svgOf(name, 18)}</span>`;

  // centres come from the picture: the gap before each item is worked out from them
  function fillRow(id, list) {
    let pos = 0, out = "";
    list.forEach(([c, name]) => {
      const gap = c - 10.8 - pos;
      if (gap > .5) out += `<span class="gap-sep gap-h" style="width:${gap.toFixed(1)}px"></span>${toolOf(name)}`;
      else out += `<span style="margin-left:${gap.toFixed(1)}px" class="d-flex">${toolOf(name)}</span>`;
      pos = c + 10.8;
    });
    document.getElementById(id).innerHTML = `<span class="grip position-absolute" style="left:7px"></span>` + out;
  }
  function fillCol(id, start, list) {
    let pos = start, out = "";
    list.forEach(([c, name]) => {
      const gap = c - 10.3 - pos;
      if (gap > .5) out += `<span class="gap-sep gap-v" style="height:${gap.toFixed(1)}px"></span>`;
      out += toolOf(name);
      pos = c + 10.3;
    });
    document.getElementById(id).innerHTML = out;
  }
  const evenly = (from, names) => names.map((n, i) => [from + i * 20.6, n]);

  fillRow("barStd", [
    [22, "new"], [43.5, "open"], [65, "save"], [93, "print"], [114.5, "preview"], [135.5, "plot"], [157, "publish"],
    [184, "cut"], [206, "copy"], [227, "paste"], [249, "brush"], [271, "match"],
    [298, "undo"], [316, "dot"], [333, "redo"], [349, "dotDim"],
    [371, "pan"], [392, "zoomrt"], [413, "zoomwin"], [435, "zoomprev"],
    [462, "props"], [484, "design"], [505, "palette"], [527, "sheet"], [549, "markup"], [570, "calc"],
    [598, "help"], [633, "txtstyle"]
  ]);
  document.getElementById("layerIcons").innerHTML = ["bulb", "sun", "sunpale", "lock", "swatch"].map(n => svgOf(n, 16)).join("");

  fillCol("leftOne", 94 + 8.7, evenly(113, ["line", "xline", "pline", "polygon", "rect", "arc", "circle", "cloud", "spline", "ellipse", "earc", "insert", "block", "point", "hatch", "grad", "region", "table", "atext"]));
  fillCol("leftTwo", 94 + 8.7, [[113, "boxa"], [140, "box"], [160, "wire"], [180, "sphere"], [200.6, "orange"], [228, "material"]]);
  fillCol("rightOne", 94 + 8.7, [...evenly(113, ["erase", "dup", "mirror", "offset", "array", "move", "rotate", "scale", "stretch", "trim", "extend", "brk", "brk2", "join", "chamfer", "fillet", "explode"]), ...evenly(481, ["front", "back", "up", "down"])]);
  fillCol("rightTwo", 94 + 8.7, [[113, "new"], ...evenly(140, ["cube1", "cube2", "cube3", "cube4", "cube5", "cube6"]), ...evenly(269, ["sp1", "sp2", "sp3", "sp4"]), [359, "camera"], [383, "target"], [421, "u1"], [443, "u2"], [465, "u3"], [490, "u4"], [511, "u5"], [532, "u6"], [562, "u7"], [583, "u8"]]);

  document.querySelectorAll("[data-icon]").forEach(el => { el.innerHTML = svgOf(el.dataset.icon, 18); });
</script>
</body>
</html>
